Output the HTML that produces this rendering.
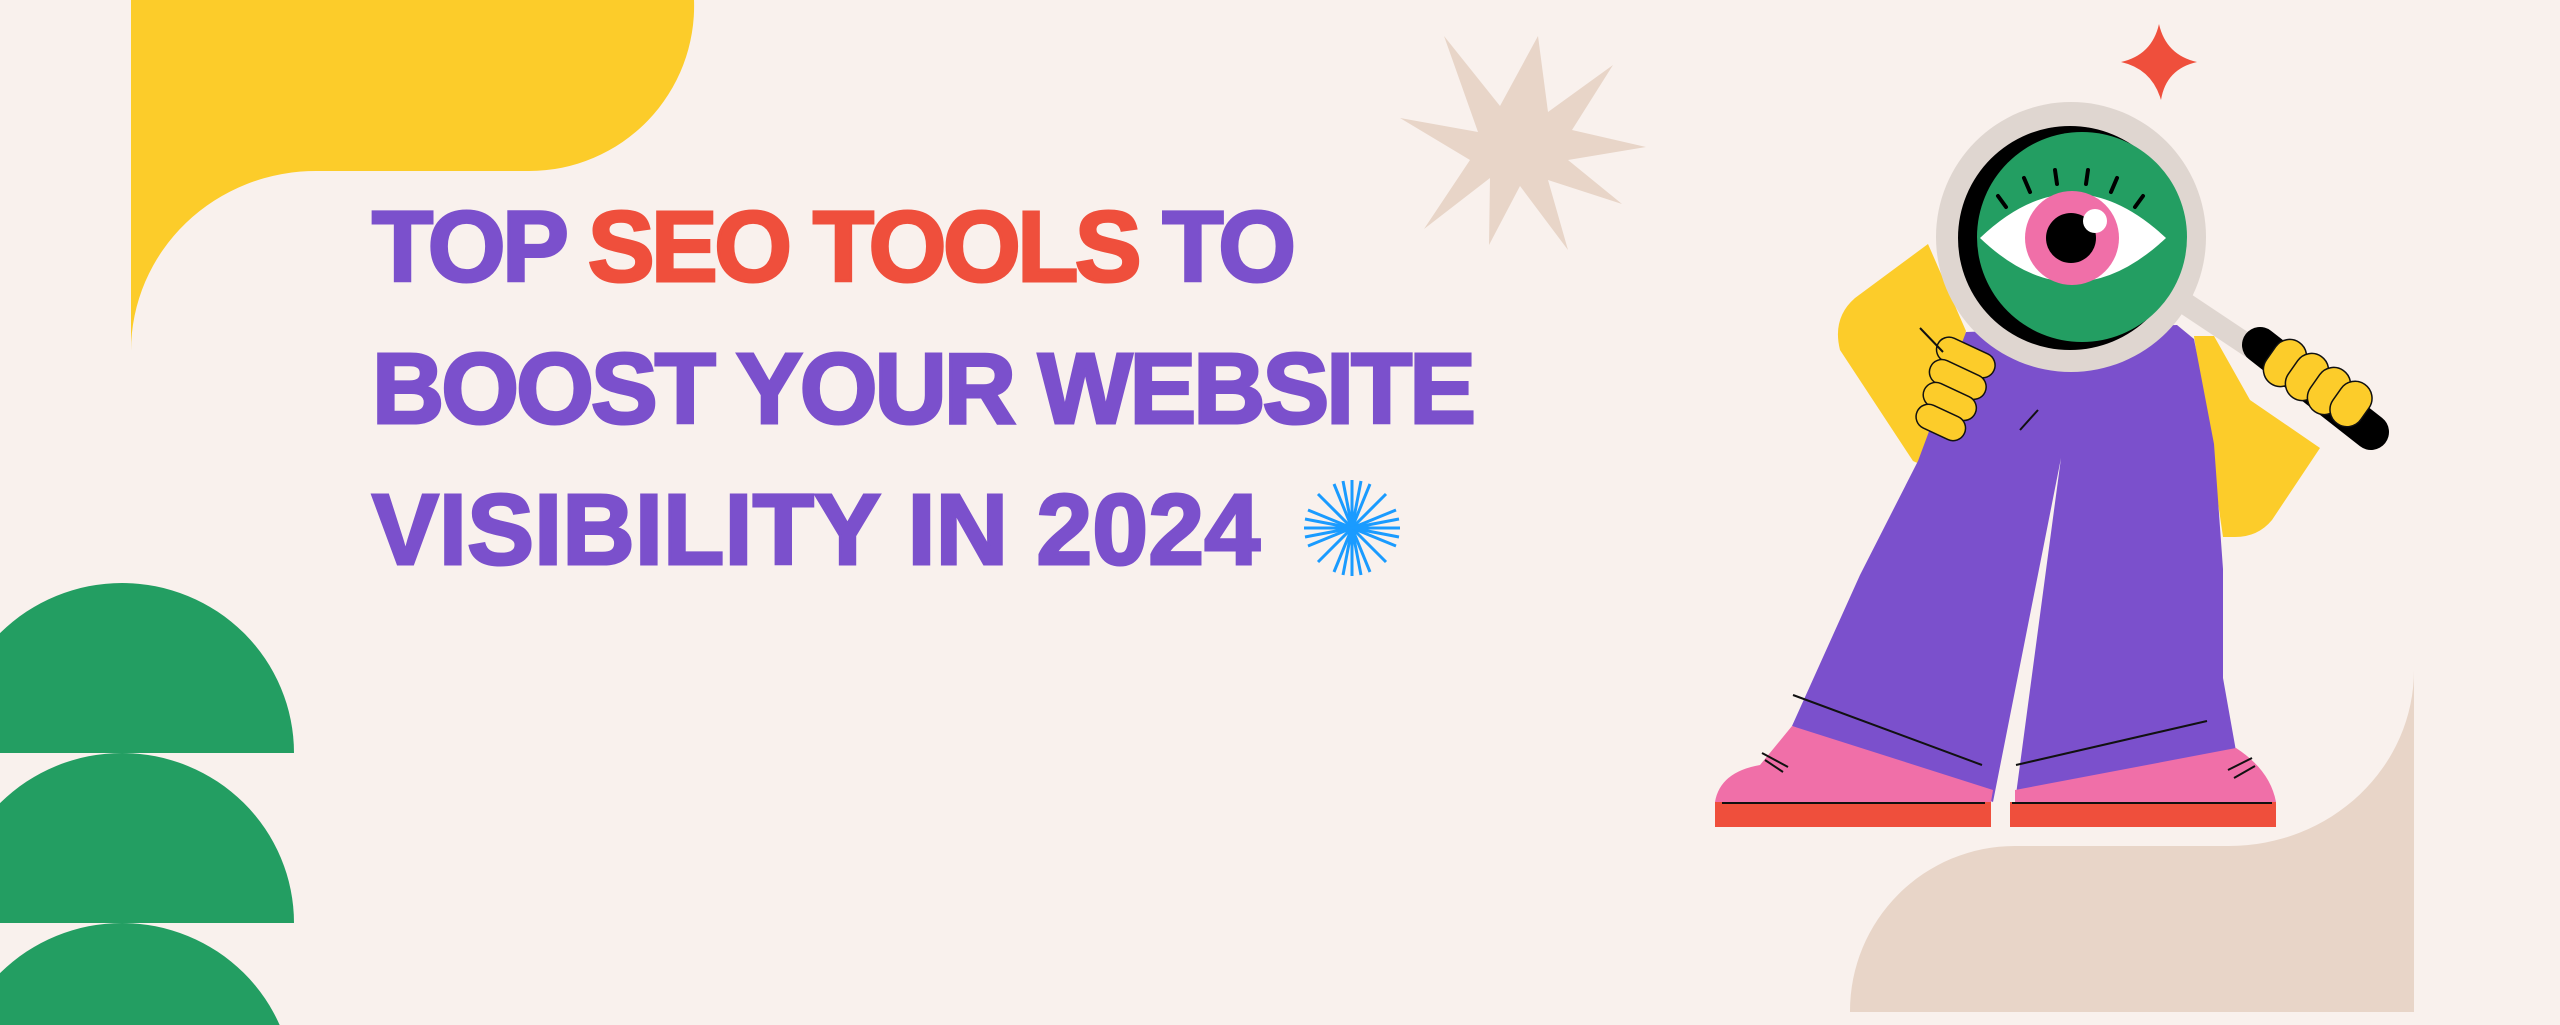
<!DOCTYPE html>
<html><head><meta charset="utf-8"><style>
html,body{margin:0;padding:0;background:#f9f1ed;width:2560px;height:1025px;overflow:hidden;}
svg{display:block}
</style></head><body>
<svg width="2560" height="1025" viewBox="0 0 2560 1025" xmlns="http://www.w3.org/2000/svg">
<rect width="2560" height="1025" fill="#f9f1ed"/>
<path d="M131 0 H694 A165 165 0 0 1 529 171 H318 A185 180 0 0 0 131 351 Z" fill="#fccc2a"/>
<path d="M-50 753 A172 170 0 0 1 294 753 Z" fill="#239e62"/>
<path d="M-50 923 A172 170 0 0 1 294 923 Z" fill="#239e62"/>
<path d="M-50 1093 A172 170 0 0 1 294 1093 Z" fill="#239e62"/>
<path d="M2414 670 V1012 H1850 V1011 A165 165 0 0 1 2015 846 H2229 A185 176 0 0 0 2414 670 Z" fill="#e8d5c8"/>
<polygon fill="#e8d5c8" points="1444,36 1500,106 1538,36 1548,112 1613,65 1572,130 1646,147 1568,160 1622,204 1548,180 1568,250 1520,186 1489,245 1490,178 1424,229 1470,160 1400,118 1478,132"/>
<path d="M2159 24 Q2166 55 2197 62 Q2166 69 2161 100 Q2152 69 2121 62 Q2152 55 2159 24 Z" fill="#ef4f3c"/>
<g font-family="Liberation Sans, sans-serif" font-weight="bold" font-size="100" stroke-width="3" lengthAdjust="spacing">
<text x="372" y="281" fill="#7b50cc" stroke="#7b50cc" textLength="924" lengthAdjust="spacing">TOP <tspan fill="#ef4f3c" stroke="#ef4f3c">SEO TOOLS</tspan> TO</text>
<text x="372" y="423" fill="#7b50cc" stroke="#7b50cc" textLength="1104" lengthAdjust="spacing">BOOST YOUR WEBSITE</text>
<text x="372" y="564" fill="#7b50cc" stroke="#7b50cc" textLength="888" lengthAdjust="spacing">VISIBILITY IN 2024</text>
</g>
<g stroke="#1a9bff" stroke-width="3" transform="translate(1352,528)">
<line x1="0" y1="-48" x2="0" y2="48"/>
<line x1="-48" y1="0" x2="48" y2="0"/>
<line x1="-34" y1="-34" x2="34" y2="34"/>
<line x1="34" y1="-34" x2="-34" y2="34"/>
<line x1="-18" y1="-44" x2="18" y2="44"/>
<line x1="18" y1="-44" x2="-18" y2="44"/>
<line x1="-44" y1="-18" x2="44" y2="18"/>
<line x1="44" y1="-18" x2="-44" y2="18"/>
<line x1="-9" y1="-47" x2="9" y2="47"/>
<line x1="9" y1="-47" x2="-9" y2="47"/>
<line x1="-47" y1="-9" x2="47" y2="9"/>
<line x1="47" y1="-9" x2="-47" y2="9"/>
</g>
<path d="M1928 244 L1855 298 Q1832 318 1840 350 L1913 461 Q1925 468 1935 452 L1966 331 Z" fill="#fccc2a"/>
<path d="M2194 336 L2214 336 L2250 400 L2320 448 L2272 520 Q2258 537 2235 537 L2223 537 Z" fill="#fccc2a"/>
<path d="M1966 332 L2177 325 L2194 339 L2214 444 L2223 569 L2223 678 L2236 751 L2015 802 L2061 458 L1993 802 L1792 726 L1860 575 L1918 461 Z" fill="#7b50cc"/>
<g stroke="#111" stroke-width="2">
<line x1="1793" y1="695" x2="1982" y2="765"/>
<line x1="2016" y1="765" x2="2207" y2="721"/>
<line x1="2038" y1="410" x2="2020" y2="430"/>
</g>
<path d="M1792 726 L1993 790 L1991 802 L1715 802 Q1720 772 1760 765 Z" fill="#f06fa8"/>
<path d="M2015 790 L2236 748 Q2270 770 2276 802 L2015 802 Z" fill="#f06fa8"/>
<rect x="1715" y="802" width="276" height="25" fill="#ef4f3c"/>
<rect x="2010" y="802" width="266" height="25" fill="#ef4f3c"/>
<g stroke="#111" stroke-width="2">
<line x1="1722" y1="803" x2="1985" y2="803"/>
<line x1="2012" y1="803" x2="2272" y2="803"/>
<line x1="1762" y1="753" x2="1788" y2="767"/><line x1="1765" y1="760" x2="1783" y2="772"/>
<line x1="2228" y1="770" x2="2252" y2="758"/><line x1="2234" y1="778" x2="2255" y2="766"/>
</g>
<line x1="2180" y1="300" x2="2270" y2="360" stroke="#dfd6d0" stroke-width="22"/>
<line x1="2260" y1="345" x2="2371" y2="432" stroke="#000" stroke-width="36" stroke-linecap="round"/>
<g fill="#fccc2a" stroke="#111" stroke-width="1.5">
<rect x="2268" y="338" width="34" height="50" rx="17" transform="rotate(35 2285 363)"/>
<rect x="2290" y="352" width="34" height="50" rx="17" transform="rotate(35 2307 377)"/>
<rect x="2312" y="366" width="34" height="50" rx="17" transform="rotate(35 2329 391)"/>
<rect x="2334" y="380" width="34" height="48" rx="17" transform="rotate(35 2351 404)"/>
</g>
<circle cx="2071" cy="237" r="135" fill="#dfd6d0"/>
<circle cx="2070" cy="238" r="112" fill="#000"/>
<circle cx="2082" cy="237" r="105" fill="#239e62"/>
<path d="M1980 238 Q2072 150 2166 238 Q2072 326 1980 238 Z" fill="#fff"/>
<circle cx="2072" cy="238" r="47" fill="#f06fa8"/>
<circle cx="2071" cy="238" r="25" fill="#000"/>
<circle cx="2095" cy="221" r="12" fill="#fff"/>
<g stroke="#000" stroke-width="4" stroke-linecap="round">
<line x1="1998" y1="196" x2="2006" y2="207"/>
<line x1="2024" y1="178" x2="2030" y2="192"/>
<line x1="2055" y1="170" x2="2057" y2="184"/>
<line x1="2088" y1="170" x2="2086" y2="184"/>
<line x1="2117" y1="178" x2="2111" y2="192"/>
<line x1="2143" y1="196" x2="2135" y2="207"/>
</g>
<g fill="#fccc2a" stroke="#111" stroke-width="1.5">
<rect x="1935" y="345" width="62" height="25" rx="12.5" transform="rotate(25 1966 357)"/>
<rect x="1928" y="367" width="60" height="25" rx="12.5" transform="rotate(25 1958 379)"/>
<rect x="1922" y="389" width="56" height="25" rx="12.5" transform="rotate(25 1950 401)"/>
<rect x="1915" y="410" width="52" height="25" rx="12.5" transform="rotate(25 1941 422)"/>
</g>
<line x1="1920" y1="328" x2="1943" y2="352" stroke="#111" stroke-width="2"/>
</svg>
</body></html>
